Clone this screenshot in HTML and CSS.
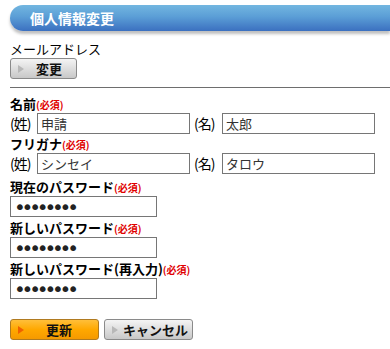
FILE: index.html
```html
<!DOCTYPE html>
<html>
<head>
    <title>個人情報変更</title>
    <link rel="stylesheet" href="styles.css">
</head>
<body>
    <div id="title-bar">
        <h1>個人情報変更</h1>
    </div>
    <div id="main-content">
        <div class="mail-label">メールアドレス</div>
        <button type="button" class="btn btn-gray btn-small"><span class="arrow"></span>変更</button>
        <hr class="divider">

        <form id="profile-form">
            <div class="label">名前<span class="req">(必須)</span></div>
            <div class="name-row">
                <span class="paren">(姓)</span><input type="text" class="name-input" value="申請">
                <span class="paren paren-gap">(名)</span><input type="text" class="name-input" value="太郎">
            </div>

            <div class="label">フリガナ<span class="req">(必須)</span></div>
            <div class="name-row">
                <span class="paren">(姓)</span><input type="text" class="name-input" value="シンセイ">
                <span class="paren paren-gap">(名)</span><input type="text" class="name-input" value="タロウ">
            </div>

            <div class="label label-pw">現在のパスワード<span class="req">(必須)</span></div>
            <input type="password" class="pw-input" value="password">

            <div class="label label-pw">新しいパスワード<span class="req">(必須)</span></div>
            <input type="password" class="pw-input" value="password">

            <div class="label label-pw">新しいパスワード(再入力)<span class="req">(必須)</span></div>
            <input type="password" class="pw-input" value="password">

            <div class="actions">
                <button type="button" class="btn btn-orange"><span class="arrow"></span>更新</button>
                <button type="button" class="btn btn-gray btn-cancel"><span class="arrow"></span>キャンセル</button>
            </div>
        </form>
    </div>
</body>
</html>
```

FILE: styles.css
```css
body {
    margin: 0;
    font-family: "Noto Sans CJK JP", "DejaVu Sans", sans-serif;
    font-size: 13px;
    color: #000;
    background-color: #fff;
}
#title-bar {
    margin: 5px 0 0 10px;
    height: 26px;
    border-radius: 13px 0 0 13px;
    background: linear-gradient(to bottom, #72b6e0 0%, #5b9ed6 45%, #3b70c0 100%);
    box-shadow: 0 3px 3px rgba(0, 0, 0, 0.25);
}
#title-bar h1 {
    margin: 0;
    padding-left: 20px;
    font-size: 14px;
    line-height: 26px;
    font-weight: bold;
    color: #fff;
}
#main-content {
    padding: 0 0 0 10px;
}
.mail-label {
    margin-top: 9px;
    line-height: 17px;
    height: 17px;
}
.btn {
    display: flex;
    align-items: center;
    box-sizing: border-box;
    height: 21px;
    padding: 0 0 0 7px;
    border: 1px solid #8a8a8a;
    border-radius: 3px;
    font-family: "Noto Sans CJK JP", "DejaVu Sans", sans-serif;
    font-size: 13px;
    font-weight: bold;
    color: #111;
    white-space: nowrap;
    cursor: pointer;
}
.btn .arrow {
    flex-shrink: 0;
    width: 0;
    height: 0;
    margin-right: 12px;
    border-top: 4px solid transparent;
    border-bottom: 4px solid transparent;
    border-left: 6px solid #b8b8b8;
}
.btn-small {
    width: 67px;
    margin-top: 1px;
}
.btn-gray {
    background: linear-gradient(to bottom, #f4f4f4 0%, #dedede 50%, #c8c8c8 100%);
}
.btn-cancel .arrow {
    margin-right: 5px;
}
.btn-orange {
    background: linear-gradient(to bottom, #ffbf3a 0%, #ffa800 50%, #f59a00 100%);
    border-color: #b07a20;
}
.btn-orange .arrow {
    border-left-color: #f06000;
    margin-right: 22px;
}
.divider {
    margin: 8px 0 0 0;
    border: none;
    border-top: 1px solid #6e6e6e;
    height: 0;
}
#profile-form {
    display: flex;
    flex-direction: column;
    align-items: flex-start;
}
.label {
    margin-top: 7px;
    line-height: 18px;
    height: 18px;
    font-weight: bold;
}
.name-row + .label {
    margin-top: 1px;
}
.pw-input + .label {
    margin-top: 2px;
}
.name-row + .label-pw {
    margin-top: 4px;
}
.req {
    font-size: 10px;
    color: #e00000;
    font-weight: bold;
}
.name-row {
    display: flex;
    align-items: center;
    height: 21px;
}
.paren {
    font-size: 14px;
    line-height: 21px;
    width: 27px;
    letter-spacing: -1px;
}
.paren-gap {
    margin-left: 4px;
    width: 28px;
}
.name-input,
.pw-input {
    box-sizing: border-box;
    height: 21px;
    margin: 0;
    padding: 0 3px;
    border: 1px solid #767676;
    font-family: "Noto Sans CJK JP", "DejaVu Sans", sans-serif;
    font-size: 13px;
    color: #333;
    background-color: #fff;
}
.name-input {
    width: 153px;
}
.pw-input {
    width: 147px;
    padding-left: 3px;
    font-family: "DejaVu Sans", sans-serif;
    font-size: 20px;
    color: #222;
    letter-spacing: -4.2px;
}
.actions {
    display: flex;
    gap: 5px;
    margin-top: 20px;
}
.actions .btn {
    width: 89px;
}
```
